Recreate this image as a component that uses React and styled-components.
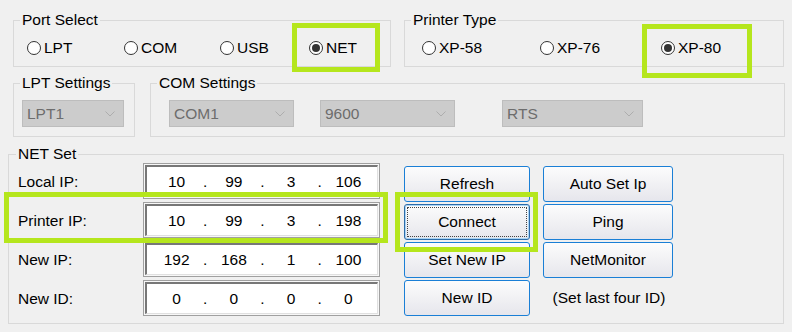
import React from 'react';
import styled, { createGlobalStyle } from 'styled-components';

const GlobalStyle = createGlobalStyle`
    body {
        margin: 0;
        background: #f0f0f0;
        font-family: "Liberation Sans", Arial, sans-serif;
        font-size: 15.5px;
        color: #000;
    }
`;

const Page = styled.div`
    width: 792px;
    height: 332px;
    box-sizing: border-box;
    padding-top: 11px;
    display: flex;
    flex-direction: column;
    overflow: hidden;
`;

const Row = styled.div`
    display: flex;
    gap: ${p => p.gap}px;
    margin-left: ${p => p.left}px;
    margin-top: ${p => p.top || 0}px;
`;

const Group = styled.fieldset`
    box-sizing: border-box;
    width: ${p => p.width}px;
    margin: 0;
    padding: 0;
    border: 1px solid #d9d9d9;
    min-inline-size: 0;
`;

const Legend = styled.legend`
    margin-left: ${p => p.offset || 6}px;
    padding: 0 2px;
    line-height: 18px;
    font-size: 15.5px;
`;

const RadioRow = styled.div`
    display: grid;
    grid-template-columns: ${p => p.cols};
    height: 37px;
    align-items: center;
    padding-left: ${p => p.left}px;
`;

const RadioItem = styled.label`
    position: relative;
    display: inline-flex;
    align-items: center;
    height: 18px;
    gap: 3px;
    justify-self: start;
`;

const Circle = styled.span`
    box-sizing: border-box;
    width: 14px;
    height: 14px;
    border-radius: 50%;
    border: 1px solid #333;
    background: #fff;
    display: flex;
    align-items: center;
    justify-content: center;
    &::after {
        content: '';
        width: 8px;
        height: 8px;
        border-radius: 50%;
        background: ${p => (p.checked ? '#333' : 'transparent')};
    }
`;

// lime annotation frame drawn over a control
const Mark = styled.span`
    position: absolute;
    inset: ${p => p.inset};
    border: 5px solid #b5e61d;
    pointer-events: none;
    z-index: 2;
`;

const Combo = styled.div`
    box-sizing: border-box;
    width: ${p => p.width}px;
    margin-left: ${p => p.offset || 0}px;
    height: 27px;
    background: #cccccc;
    border: 1px solid #bdbdbd;
    color: #6d6d6d;
    display: flex;
    align-items: center;
    justify-content: space-between;
    padding: 0 8px 0 4px;
`;

const ComboRow = styled.div`
    display: flex;
    padding: 8px 0 9px ${p => p.left}px;
`;

const NetBody = styled.div`
    display: flex;
    gap: 24px;
    padding: 0 0 7px 9px;
`;

const IpColumn = styled.div`
    display: flex;
    flex-direction: column;
    gap: 3px;
`;

const IpRow = styled.div`
    position: relative;
    display: grid;
    grid-template-columns: 125px 237px;
    align-items: center;
    height: 36px;
`;

const IpLabel = styled.span`
    padding-top: 2px;
`;

const IpOuter = styled.div`
    box-sizing: border-box;
    height: 36px;
    border: 1px solid #a0a0a0;
    padding: 1px;
    background: #f7f7f7;
`;

const IpInner = styled.div`
    box-sizing: border-box;
    height: 100%;
    background: #fff;
    border-top: 2px solid #777;
    border-left: 2px solid #777;
    border-right: 1px solid #e0e0e0;
    border-bottom: 1px solid #e0e0e0;
    display: flex;
    align-items: center;
    padding: 0 0 0 1px;
`;

const Octet = styled.span`
    flex: 1;
    text-align: center;
`;

const Dot = styled.span`
    width: 0;
    display: flex;
    justify-content: center;
`;

const ButtonGrid = styled.div`
    display: grid;
    grid-template-columns: 126px 130px;
    grid-auto-rows: 36px;
    column-gap: 13px;
    row-gap: 2px;
    padding-top: 3px;
`;

const Button = styled.button`
    position: relative;
    box-sizing: border-box;
    font: inherit;
    color: #000;
    border: 1px solid ${p => (p.focused ? '#2b6aa8' : '#1a7fd6')};
    border-radius: 3px;
    background: linear-gradient(#fcfcfc, #f1f1f4 50%, #e6e6ec);
    box-shadow: ${p => (p.focused ? 'inset 0 0 0 1px #a8d4f5' : 'none')};
    padding: 0;
    &::after {
        content: '';
        display: ${p => (p.focused ? 'block' : 'none')};
        position: absolute;
        inset: 2px;
        border: 1px dotted #444;
    }
`;

const Note = styled.div`
    display: flex;
    align-items: center;
    justify-content: center;
    padding-left: 2px;
`;

const Chevron = () => (
    <svg width="10" height="6" viewBox="0 0 10 6">
        <polyline points="0.5,0.5 5,5 9.5,0.5" fill="none" stroke="#adadad" strokeWidth="1" />
    </svg>
);

const Radio = ({ label, checked, mark }) => (
    <RadioItem>
        <Circle checked={checked} />
        {label}
        {mark && <Mark inset={mark} />}
    </RadioItem>
);

const IpBox = ({ parts }) => (
    <IpOuter>
        <IpInner>
            {parts.map((p, i) => (
                <React.Fragment key={i}>
                    {i > 0 && <Dot>.</Dot>}
                    <Octet>{p}</Octet>
                </React.Fragment>
            ))}
        </IpInner>
    </IpOuter>
);

const ips = [
    { label: 'Local IP:', parts: ['10', '99', '3', '106'] },
    { label: 'Printer IP:', parts: ['10', '99', '3', '198'], mark: '-10px -8px -5px -14px' },
    { label: 'New IP:', parts: ['192', '168', '1', '100'] },
    { label: 'New ID:', parts: ['0', '0', '0', '0'] },
];

export default function App() {
    return (
        <Page>
            <GlobalStyle />
            <Row left={13} gap={13}>
                <Group width={378}>
                    <Legend>Port Select</Legend>
                    <RadioRow cols="97px 96px 89px auto" left={13}>
                        <Radio label="LPT" />
                        <Radio label="COM" />
                        <Radio label="USB" />
                        <Radio label="NET" checked mark="-16px -23px -15px -17px" />
                    </RadioRow>
                </Group>
                <Group width={380}>
                    <Legend>Printer Type</Legend>
                    <RadioRow cols="118px 121px auto" left={17}>
                        <Radio label="XP-58" />
                        <Radio label="XP-76" />
                        <Radio label="XP-80" checked mark="-15px -31px -21px -19px" />
                    </RadioRow>
                </Group>
            </Row>

            <Row left={13} gap={15} top={7}>
                <Group width={122}>
                    <Legend>LPT Settings</Legend>
                    <ComboRow left={8}>
                        <Combo width={102}>LPT1<Chevron /></Combo>
                    </ComboRow>
                </Group>
                <Group width={635}>
                    <Legend>COM Settings</Legend>
                    <ComboRow left={18}>
                        <Combo width={125}>COM1<Chevron /></Combo>
                        <Combo width={135} offset={26}>9600<Chevron /></Combo>
                        <Combo width={141} offset={47}>RTS<Chevron /></Combo>
                    </ComboRow>
                </Group>
            </Row>

            <Row left={8} gap={0} top={8}>
                <Group width={776}>
                    <Legend offset={7}>NET Set</Legend>
                    <NetBody>
                        <IpColumn>
                            {ips.map(r => (
                                <IpRow key={r.label}>
                                    <IpLabel>{r.label}</IpLabel>
                                    <IpBox parts={r.parts} />
                                    {r.mark && <Mark inset={r.mark} />}
                                </IpRow>
                            ))}
                        </IpColumn>
                        <ButtonGrid>
                            <Button>Refresh</Button>
                            <Button>Auto Set Ip</Button>
                            <Button focused>
                                Connect
                                <Mark inset="-13px -9px -13px -10px" />
                            </Button>
                            <Button>Ping</Button>
                            <Button>Set New IP</Button>
                            <Button>NetMonitor</Button>
                            <Button>New ID</Button>
                            <Note>(Set last four ID)</Note>
                        </ButtonGrid>
                    </NetBody>
                </Group>
            </Row>
        </Page>
    );
}
